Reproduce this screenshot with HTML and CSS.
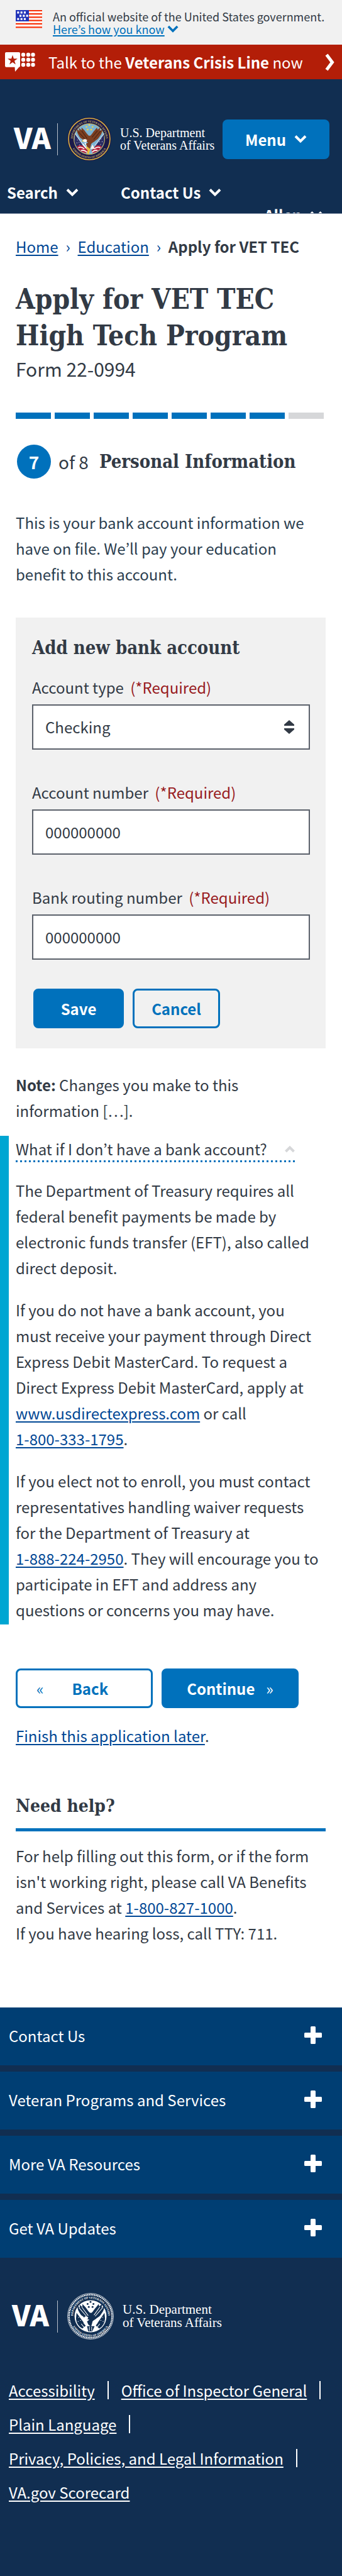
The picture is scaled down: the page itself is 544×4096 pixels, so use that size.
FILE: index.html
```
<!DOCTYPE html>
<html lang="en">
<head>
<meta charset="utf-8">
<meta name="viewport" content="width=device-width, initial-scale=1">
<title>Apply for VET TEC | Veterans Affairs</title>
<link rel="stylesheet" href="styles.css">
</head>
<body>
<svg class="defs" aria-hidden="true">
  <symbol id="chev" viewBox="0 0 20 14"><path d="M2 2.500l8 8 8-8" fill="none" stroke="currentColor" stroke-width="4"/></symbol>
  <symbol id="plus" viewBox="0 0 28 28"><path d="M11.500 0h5q1.500 0 1.500 1.500v8.500h8.500q1.500 0 1.500 1.500v5q0 1.500-1.500 1.500h-8.500v8.500q0 1.500-1.500 1.500h-5q-1.500 0-1.500-1.500v-8.500h-8.500q-1.500 0-1.500-1.500v-5q0-1.500 1.500-1.500h8.500v-8.500q0-1.500 1.500-1.500z" fill="currentColor"/></symbol>
  <path id="arc-top" d="M11.400 50A30.300 30.300 0 1 1 68.600 50"/>
  <path id="arc-bottom" d="M5 40A35 35 0 0 0 75 40"/>
  <path id="wings" d="M38 46C33 45 29 43 27 40C24 39 22 36 20 32C18 29 18 26 17 22L22 25L21 20L26 24L26 19L31 24C34 28 36 31 39 34L42 34C45 31 47 27 50 24L54 19L55 23L60 19L59 25L64 23C63 28 62 32 59 35C57 39 54 41 51 43C47 47 43 47 43 51L41 58L36 54L34 49Z"/>
</svg>

<div class="gov">
  <svg class="flag" viewBox="0 0 42 29" aria-hidden="true">
    <rect width="42" height="29" fill="#fff"/>
    <path d="M0 1h42M0 6.200h42M0 11.400h42M0 16.600h42M0 21.900h42M0 27.400h42" stroke="#f7320b" stroke-width="2.200"/>
    <rect width="21" height="18" fill="#2234b8"/>
    <path d="M2.300 3.900h14M6 9.100h14M2.300 14.300h14" stroke="#fff" stroke-width="3.100" stroke-dasharray="3.100 2.200"/>
  </svg>
  <div class="gov-text">An official website of the United States government.<br><button class="gov-btn" type="button"><span>Here’s how you know</span><svg class="gov-chev" aria-hidden="true"><use href="#chev"/></svg></button></div>
</div>

<a class="crisis" href="#">
  <svg class="crisis-icon" viewBox="0 0 48 31" aria-hidden="true">
    <path d="M2 0h20q2 0 2 2v20q0 1.500-2 2l-6 7-.5-7.300h-13.500q-2 0-2-2v-19.700q0-2 2-2z" fill="#fff"/>
    <path d="M12 4.500l1.900 5.700h6l-4.900 3.500 1.900 5.700-4.900-3.500-4.900 3.500 1.900-5.700-4.900-3.500h6z" fill="#b31e08"/>
    <g fill="#fff"><circle cx="29" cy="4" r="3.200"/><circle cx="37" cy="4" r="3.200"/><circle cx="44.500" cy="4" r="3.200"/><circle cx="29" cy="12" r="3.200"/><circle cx="37" cy="12" r="3.200"/><circle cx="44.500" cy="12" r="3.200"/><circle cx="29" cy="20" r="3.200"/><circle cx="37" cy="20" r="3.200"/><circle cx="44.500" cy="20" r="3.200"/></g>
  </svg>
  <span class="crisis-text">Talk to the <b>Veterans Crisis Line</b> now</span>
  <svg class="crisis-arrow" viewBox="0 0 16 28" aria-hidden="true"><path d="M2.500 2l9 12-9 12" fill="none" stroke="#fff" stroke-width="5"/></svg>
</a>

<header class="header">
  <div class="brand">
    <span class="va">VA</span>
    <span class="rule"></span>
    <svg class="seal" viewBox="0 0 80 80" role="img" aria-label="Department of Veterans Affairs seal">
      <circle cx="40" cy="40" r="40" fill="#1b1a4b"/>
      <circle cx="40" cy="40" r="37.700" fill="none" stroke="#d9b13f" stroke-width="1.800"/>
      <circle cx="40" cy="40" r="28" fill="#7cb4d4" stroke="#d9b13f" stroke-width="1"/>
      <g class="seal-text" fill="#cfb562"><text><textPath href="#arc-top" startOffset="50%">DEPARTMENT OF VETERANS AFFAIRS</textPath></text><text><textPath href="#arc-bottom" startOffset="50%">UNITED STATES OF AMERICA</textPath></text></g>
      <path d="M14 31L32 57L26 62Q15 56 13 44ZM67 31L48 57L54 62Q65 56 67 44Z" fill="#2a2b62"/>
      <path d="M14 30L30 52M67 30L50 52" stroke="#d7dde8" stroke-width="1.200"/>
      <path d="M18 42h1M21 46h1M17 47h1M22 51h1M61 40h1M58 45h1M63 45h1M60 50h1" stroke="#fff" stroke-width="1.300"/>
      <path d="M17 54Q22 50 28 52L38 61L34 66Q24 64 17 54ZM63 54Q58 50 52 52L44 61L46 66Q56 64 63 54Z" fill="#b8223a"/>
      <path d="M20 56Q25 53 31 58M25 61Q30 59 36 64M60 56Q55 53 49 58M55 61Q50 59 45 64M28 49L35 57M32 47L38 56" fill="none" stroke="#fff" stroke-width="1.800"/>
      <use href="#wings" fill="#7d3f22"/>
      <path d="M20 27L33 41M26 25L36 39M61 25L48 41M55 25L45 37" stroke="#4a2615" stroke-width="1.200"/>
      <path d="M28 42Q32 38 36 42L35 46L29 45ZM42 58L46 50L50 58Z" fill="#f7f3ec"/>
      <path d="M28 42l-2 2 4 1zM34 53l5 3-3 4zM38 56l4 2-3 10-3-2z" fill="#eebc35"/>
      <g fill="#f4d443"><circle cx="40" cy="14.500" r="1.500"/><circle cx="35" cy="18" r="1.500"/><circle cx="46" cy="18" r="1.500"/><circle cx="37" cy="23" r="1.500"/><circle cx="43.500" cy="23" r="1.500"/></g>
    </svg>
    <span class="dept">U.S. Department<br>of Veterans Affairs</span>
    <button class="menu" type="button">Menu <svg class="ch" aria-hidden="true"><use href="#chev"/></svg></button>
  </div>
  <nav class="tools">
    <button type="button">Search <svg class="ch" aria-hidden="true"><use href="#chev"/></svg></button>
    <button type="button">Contact Us <svg class="ch" aria-hidden="true"><use href="#chev"/></svg></button>
    <button class="user" type="button">Allen <svg class="ch" aria-hidden="true"><use href="#chev"/></svg></button>
  </nav>
</header>

<main class="main">
  <nav class="crumbs"><a href="#">Home</a><i>›</i><a href="#">Education</a><i>›</i><b>Apply for VET TEC</b></nav>
  <h1>Apply for VET TEC High Tech Program</h1>
  <p class="form-no">Form 22-0994</p>
  <div class="progress"><span></span><span></span><span></span><span></span><span></span><span></span><span></span><span class="todo"></span></div>
  <div class="step"><span class="num">7</span><span class="of">of 8</span><h2>Personal Information</h2></div>
  <p class="intro">This is your bank account information we have on file. We’ll pay your education benefit to this account.</p>

  <form class="panel">
    <h2>Add new bank account</h2>
    <div class="field">
      <label for="type">Account type <em>(*Required)</em></label>
      <div class="select"><select id="type"><option>Checking</option></select>
      <svg viewBox="0 0 16 22" aria-hidden="true"><path d="M8 0l8 7v2h-16v-2zM0 13h16v2l-8 7-8-7z" fill="#323a45"/></svg></div>
    </div>
    <div class="field">
      <label for="acct">Account number <em>(*Required)</em></label>
      <input id="acct" type="text" value="000000000">
    </div>
    <div class="field">
      <label for="route">Bank routing number <em>(*Required)</em></label>
      <input id="route" type="text" value="000000000">
    </div>
    <div class="actions"><button class="btn save" type="button">Save</button><button class="btn outline cancel" type="button">Cancel</button></div>
  </form>

  <p class="note"><b>Note:</b> Changes you make to this information […].</p>

  <section class="info">
    <button class="toggle" type="button"><span>What if I don’t have a bank account?</span><svg viewBox="0 0 16 12" aria-hidden="true"><path d="M1.500 10l6.500-6.500 6.500 6.500" fill="none" stroke="#d6d7d9" stroke-width="4"/></svg></button>
    <p>The Department of Treasury requires all federal benefit payments be made by electronic funds transfer (EFT), also called direct deposit.</p>
    <p>If you do not have a bank account, you must receive your payment through Direct Express Debit MasterCard. To request a Direct Express Debit MasterCard, apply at <a href="#">www.usdirectexpress.com</a> or call <a class="tel" href="#">1-800-333-1795</a>.</p>
    <p>If you elect not to enroll, you must contact representatives handling waiver requests for the Department of Treasury at <a class="tel" href="#">1-888-224-2950</a>. They will encourage you to participate in EFT and address any questions or concerns you may have.</p>
  </section>

  <div class="paging"><button class="btn outline back" type="button"><span class="q">«</span><span>Back</span></button><button class="btn" type="button"><span>Continue</span><span class="q">»</span></button></div>
  <p class="later"><a href="#">Finish this application later</a>.</p>

  <section class="help">
    <h2>Need help?</h2>
    <p>For help filling out this form, or if the form isn't working right, please call VA Benefits and Services at <a class="tel" href="#">1-800-827-1000</a>.<br>If you have hearing loss, call TTY: 711.</p>
  </section>
</main>

<footer class="footer">
  <button class="acc" type="button">Contact Us<svg aria-hidden="true"><use href="#plus"/></svg></button>
  <button class="acc" type="button">Veteran Programs and Services<svg aria-hidden="true"><use href="#plus"/></svg></button>
  <button class="acc" type="button">More VA Resources<svg aria-hidden="true"><use href="#plus"/></svg></button>
  <button class="acc" type="button">Get VA Updates<svg aria-hidden="true"><use href="#plus"/></svg></button>
  <div class="brand foot-brand">
    <span class="va">VA</span>
    <span class="rule"></span>
    <svg class="seal" viewBox="0 0 80 80" role="img" aria-label="Department of Veterans Affairs seal">
      <circle cx="40" cy="40" r="39.400" fill="none" stroke="#fff" stroke-width=".8"/>
      <circle cx="40" cy="40" r="37" fill="none" stroke="#fff" stroke-width="2.600" stroke-dasharray="1.900 1"/>
      <circle cx="40" cy="40" r="27.500" fill="#fff"/>
      <g class="seal-text" fill="#fff"><text><textPath href="#arc-top" startOffset="50%">DEPARTMENT OF VETERANS AFFAIRS</textPath></text><text><textPath href="#arc-bottom" startOffset="50%">UNITED STATES OF AMERICA</textPath></text></g>
      <g fill="#112e51">
        <path d="M16 34L32 56L26 61Q16 56 15 44ZM64 34L49 56L55 61Q64 56 65 44Z"/>
        <use href="#wings"/>
        <path d="M34 57L47 57L43 66L36 66Z"/>
        <circle cx="40" cy="15.500" r="1.600"/><circle cx="35" cy="19" r="1.600"/><circle cx="45" cy="19" r="1.600"/><circle cx="37" cy="24" r="1.600"/><circle cx="43.500" cy="24" r="1.600"/>
      </g>
      <path d="M19 42h1.500M22 47h1.500M18 49h1.500M60 42h1.500M57 47h1.500M61 49h1.500M24 53l5 6M28 51l5 6M56 53l-5 6M52 51l-5 6M20 25L33 40M25 24L36 39M61 25L48 40M56 24L46 38M38 58v7M42 58v7" stroke="#fff" stroke-width="1.100"/>
      <path d="M29 42Q32 38 36 42L35 45L30 44Z" fill="#fff"/>
    </svg>
    <span class="dept">U.S. Department<br>of Veterans Affairs</span>
  </div>
  <ul class="links"><li><a href="#">Accessibility</a></li><li><a href="#">Office of Inspector General</a></li><li><a href="#">Plain Language</a></li><li><a href="#">Privacy, Policies, and Legal Information</a></li><li><a href="#">VA.gov Scorecard</a></li></ul>
</footer>
</body>
</html>
```
FILE: styles.css
```
*{box-sizing:border-box}
body{margin:0;background:#fff;color:#323a45;font:24px/41px "Noto Sans CJK KR","Noto Sans",sans-serif}
h1,h2,p,ul{margin:0;padding:0}
button,input,select{font:inherit;color:inherit;margin:0}
button{background:none;border:0;padding:0;cursor:pointer;text-align:left}
a{color:#004795;text-decoration-thickness:2px;text-underline-offset:3px}
svg{display:block;flex:none}
.defs{position:absolute;width:0;height:0}
.tel{white-space:nowrap}

.gov{display:flex;gap:17px;padding:16px 0 15px 25px;background:#f1f1f1;font-size:18px;line-height:20px}
.flag{width:42px;height:29px}
.gov-text{height:40px;white-space:nowrap}
.gov-btn{display:inline-flex;align-items:center;gap:4px;color:#0071bc;line-height:20px}
.gov-btn span{text-decoration:underline;text-decoration-thickness:2px;text-underline-offset:2px}
.gov-chev{width:18px;height:14px}

.crisis{display:flex;align-items:center;height:55px;padding:0 11px 0 8px;background:#b31e08;color:#fff;text-decoration:none}
.crisis-icon{width:48px;height:31px}
.crisis-text{flex:1;margin-left:21px;white-space:nowrap}
.crisis-arrow{width:16px;height:28px}

.header{height:214px;overflow:hidden;background:#112e51;color:#fff;border-bottom:1px solid #71819a}
.brand{display:flex;align-items:center;padding:60px 20px 0 22px}
.va{width:69px;padding-bottom:9px;font-size:46px;line-height:52px;font-weight:900}
.rule{width:1px;height:51px;background:#b8c0cb}
.seal{width:70px;height:70px;margin:0 14px 0 15px}
.seal-text{font:bold 5px "Liberation Serif",serif;text-anchor:middle}
.dept{font:20px/20px "Liberation Serif",serif;white-space:nowrap}
.menu{display:flex;align-items:center;justify-content:center;gap:13px;width:170px;height:63px;margin-left:auto;border-radius:8px;background:#0071bc;font-weight:700}
.ch{width:20px;height:14px}
.tools{display:grid;grid-template-columns:181px 1fr;padding:32px 31px 0 11px;font-weight:700;line-height:36px}
.tools button{display:flex;align-items:center;gap:13px}
.tools .user{grid-column:2;justify-self:end}

.main{padding:0 26px 0 25px}
.main p{padding-right:10px}
.crumbs{display:flex;padding-top:31px;white-space:nowrap}
.crumbs i{width:31px;text-align:center;font-style:normal;color:#004795}
h1,h2{font-family:"DejaVu Serif Condensed","DejaVu Serif",serif;font-weight:700}
h1{margin-top:35px;font-size:44px;line-height:58px}
h2{font-size:29px;white-space:nowrap}
.form-no{margin-top:3px;font-size:30px}
.progress{display:flex;gap:6px;margin-top:49px;padding-right:3px}
.progress span{flex:1;height:10px;background:#0071bc}
.progress .todo{background:#d6d7d9}
.step{display:flex;align-items:center;margin-top:41px}
.num{width:54px;height:54px;margin:0 12px 0 2px;border-radius:50%;background:#0071bc;color:#fff;font-size:28px;font-weight:700;line-height:54px;text-align:center}
.of{font-size:28px}
.step h2{margin-left:17px}
.intro{margin-top:49px;color:#2b3e4f}
.panel{margin-top:49px;padding:28px 25px 32px 26px;background:#f1f1f1}
.field{margin-top:52px}
.panel h2+.field{margin-top:26px}
.field label{display:block;margin-bottom:12px;line-height:31px}
.field em{margin-left:5px;font-style:normal;color:#981b1e}
.field input,.field select{display:block;width:100%;height:72px;padding:0 19px 2px;border:2px solid #5b616b;border-radius:0;background:#fff;appearance:none}
.select{position:relative}
.select svg{position:absolute;right:25px;top:25px;width:16px;height:22px}
.actions{display:flex;gap:14px;margin:46px 0 0 2px}
.btn{height:63px;border:3px solid #0071bc;border-radius:8px;background:#0071bc;color:#fff;font-weight:700;text-align:center}
.outline{background:transparent;color:#0071bc}
.save{width:144px}
.cancel{width:139px}
.note{margin-top:37px}
.info{margin:20px -26px 0 -25px;padding:5px 26px 3px 11px;border-left:14px solid #00a6d2}
.info p+p{margin-top:26px}
.toggle{display:flex;align-items:center;gap:28px;width:fit-content;margin-bottom:24px;padding:0 3px 6px 0;line-height:31px;background:repeating-linear-gradient(90deg,#0071bc 0 3px,transparent 3px 7px) bottom/100% 3px no-repeat}
.toggle svg{width:16px;height:12px}
.paging{display:flex;gap:14px;margin-top:70px}
.paging .btn{display:flex;align-items:center;justify-content:center;gap:18px;width:218px}
.paging .back{justify-content:flex-start;gap:45px;padding-left:30px}
.q{font-weight:400}
.later{margin-top:23px}
.help h2{margin-top:71px;padding-bottom:15px;border-bottom:5px solid #0071bc;font-size:28px}
.help p{margin-top:18px}

.footer{margin-top:98px;background:#112e51;color:#fff}
.acc{display:flex;align-items:center;justify-content:space-between;width:100%;height:92px;margin-bottom:10px;padding:0 32px 4px 14px;background:#003e73}
.acc svg{width:28px;height:28px}
.foot-brand{padding:46px 20px 0 19px}
.foot-brand .va{width:72px}
.foot-brand .seal{width:74px;height:74px}
.foot-brand .dept{font-size:21px;line-height:21px}
.links{display:flex;flex-wrap:wrap;padding:53px 0 107px 14px;list-style:none}
.links li{display:flex;align-items:center;height:54px;white-space:nowrap}
.links a{color:#fff}
.links li:not(:last-child)::after{content:"";width:2px;height:29px;margin:0 20px;background:#fff}
```
